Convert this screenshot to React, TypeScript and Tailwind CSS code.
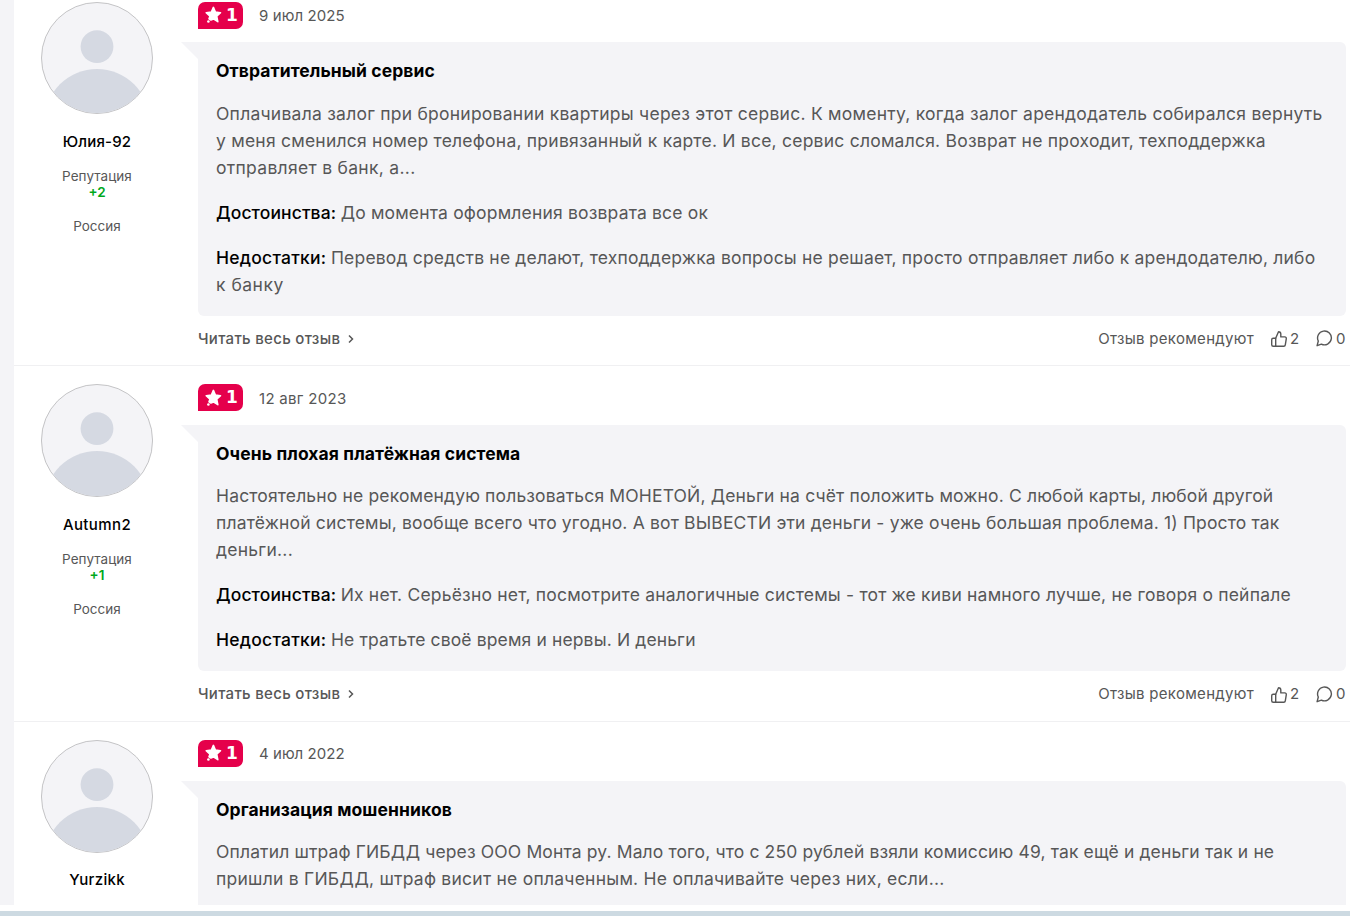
import React from 'react';

interface TextLine {
  text: string;
  label?: string;
  labelTracking?: string;
  tracking: string;
}

interface Review {
  author: string;
  nameTracking: string;
  reputation?: string;
  country?: string;
  date: string;
  dateTracking: string;
  rating: number;
  title: string;
  paragraphs: TextLine[][];
  likes?: number;
  comments?: number;
}

const reviews: Review[] = [
  {
    author: 'Юлия-92',
    nameTracking: 'tracking-[0.15px]',
    reputation: '+2',
    country: 'Россия',
    date: '9 июл 2025',
    dateTracking: 'tracking-[0.1px]',
    rating: 1,
    title: 'Отвратительный сервис',
    paragraphs: [
      [
        { text: 'Оплачивала залог при бронировании квартиры через этот сервис. К моменту, когда залог арендодатель собирался вернуть', tracking: 'tracking-[0.24px]' },
        { text: 'у меня сменился номер телефона, привязанный к карте. И все, сервис сломался. Возврат не проходит, техподдержка', tracking: 'tracking-[0.225px]' },
        { text: 'отправляет в банк, а...', tracking: 'tracking-[0.3px]' },
      ],
      [{ label: 'Достоинства:', labelTracking: 'tracking-[0.1px]', text: 'До момента оформления возврата все ок', tracking: 'tracking-[0.175px]' }],
      [
        { label: 'Недостатки:', labelTracking: 'tracking-[0.25px]', text: 'Перевод средств не делают, техподдержка вопросы не решает, просто отправляет либо к арендодателю, либо', tracking: 'tracking-[0.18px]' },
        { text: 'к банку', tracking: 'tracking-[0.5px]' },
      ],
    ],
    likes: 2,
    comments: 0,
  },
  {
    author: 'Autumn2',
    nameTracking: 'tracking-[0.4px]',
    reputation: '+1',
    country: 'Россия',
    date: '12 авг 2023',
    dateTracking: 'tracking-[0.3px]',
    rating: 1,
    title: 'Очень плохая платёжная система',
    paragraphs: [
      [
        { text: 'Настоятельно не рекомендую пользоваться МОНЕТОЙ, Деньги на счёт положить можно. С любой карты, любой другой', tracking: 'tracking-[0.15px]' },
        { text: 'платёжной системы, вообще всего что угодно. А вот ВЫВЕСТИ эти деньги - уже очень большая проблема. 1) Просто так', tracking: 'tracking-[0.165px]' },
        { text: 'деньги...', tracking: 'tracking-[0.25px]' },
      ],
      [{ label: 'Достоинства:', labelTracking: 'tracking-[0.1px]', text: 'Их нет. Серьёзно нет, посмотрите аналогичные системы - тот же киви намного лучше, не говоря о пейпале', tracking: 'tracking-[0.195px]' }],
      [{ label: 'Недостатки:', labelTracking: 'tracking-[0.25px]', text: 'Не тратьте своё время и нервы. И деньги', tracking: 'tracking-[0.135px]' }],
    ],
    likes: 2,
    comments: 0,
  },
  {
    author: 'Yurzikk',
    nameTracking: 'tracking-[0.3px]',
    date: '4 июл 2022',
    dateTracking: 'tracking-[0.05px]',
    rating: 1,
    title: 'Организация мошенников',
    paragraphs: [
      [
        { text: 'Оплатил штраф ГИБДД через ООО Монта ру. Мало того, что с 250 рублей взяли комиссию 49, так ещё и деньги так и не', tracking: 'tracking-[0.135px]' },
        { text: 'пришли в ГИБДД, штраф висит не оплаченным. Не оплачивайте через них, если...', tracking: 'tracking-[0.24px]' },
      ],
    ],
  },
];

const Avatar: React.FC = () => (
  <div className="w-28 h-[112.8px] rounded-full border border-[#c4c4c6] overflow-hidden bg-[#f4f4f7]">
    <svg viewBox="1 1 110 110" className="block w-full h-full" fill="#d5d9e2">
      <circle cx="56" cy="44.2" r="16.4" />
      <circle cx="56" cy="119" r="52.5" />
    </svg>
  </div>
);

const StarIcon: React.FC = () => (
  <svg viewBox="0 0 18 18" className="w-[18px] h-[18px]" fill="#fff" stroke="#fff" strokeWidth="1.6" strokeLinejoin="round">
    <path d="M9.4 1.4l2 4.7 5.1.6-3.8 3.5 1.1 5.4-4.4-2.7-2.5 1.1-1.9-1.1 1-2.7-3.8-3.500 5.200-.6z" />
    <circle cx="4.4" cy="15.5" r="1.3" stroke="none" />
  </svg>
);

const ThumbIcon: React.FC = () => (
  <svg viewBox="0 0 18 18" className="w-[18px] h-[18px]" fill="none" stroke="#575757" strokeWidth="1.4" strokeLinejoin="round" strokeLinecap="round">
    <path d="M5.7 8.2L8.5 1.7c1.3 0 2.3 1 2.3 2.3v2.9h4c1 0 1.6.8 1.5 1.7l-1 6.3c-.1.8-.7 1.3-1.5 1.3H5.7z" />
    <path d="M5.7 16.2H3.200c-.9 0-1.5-.6-1.5-1.5v-5c0-.9.6-1.5 1.5-1.5h2.5" />
  </svg>
);

const CommentIcon: React.FC = () => (
  <svg viewBox="0 0 18 18" className="w-[18px] h-[18px]" fill="none" stroke="#575757" strokeWidth="1.4" strokeLinejoin="round">
    <path d="M1.1 15.7L2.3 11A6.9 6.9 0 1 1 5.4 14.1z" />
  </svg>
);

const Line: React.FC<{ line: TextLine }> = ({ line }) => (
  <span className="block whitespace-nowrap">
    {line.label && <b className={`font-medium text-black inline-block mr-[4.5px] ${line.labelTracking}`}>{line.label}</b>}
    <span className={line.tracking}>{line.text}</span>
  </span>
);

const ReviewItem: React.FC<{ review: Review }> = ({ review }) => (
  <article className="flex border-b border-[#f0f0f2] pt-[18px]">
    <div className="w-[166px] shrink-0 flex flex-col items-center text-center text-[#575757]">
      <Avatar />
      <p className={`mt-[15.7px] text-[15px] leading-6 font-medium text-black ${review.nameTracking}`}>{review.author}</p>
      {review.reputation && (
        <>
          <p className="mt-[14.1px] text-[13.5px] leading-4 tracking-[0.05px]">Репутация</p>
          <p className="text-[13.5px] leading-4 font-semibold text-[#00a81c]">{review.reputation}</p>
          <p className="mt-[18px] text-[13.5px] leading-4">{review.country}</p>
        </>
      )}
    </div>
    <div className="ml-[18px] w-[1148px] shrink-0">
      <div className="flex items-center h-[27px]">
        <div className="w-[45px] h-[27px] flex items-center pl-1.5 gap-1 rounded-t-[7px] rounded-br-[7px] bg-[#e5004b] text-white">
          <StarIcon />
          <span className="font-['DejaVu_Sans',sans-serif] text-[17px] leading-[27px] font-bold">{review.rating}</span>
        </div>
        <time className={`ml-4 pt-[2.4px] text-[15px] text-[#575757] ${review.dateTracking}`}>{review.date}</time>
      </div>
      <div className="relative mt-[13.8px] p-[18px] rounded-md rounded-tl-none bg-[#f4f4f7] text-[17.5px] leading-[27px] text-[#575757]">
        <svg viewBox="0 0 17 17" className="absolute -left-[17px] top-0 w-[17px] h-[17px]" fill="#f4f4f7">
          <path d="M0 0h17v17z" />
        </svg>
        <h3 className="text-[17.5px] leading-[21.2px] font-bold text-black tracking-[0.1px]">{review.title}</h3>
        {review.paragraphs.map((lines, i) => (
          <p key={i} className="mt-[18px]">
            {lines.map((line) => <Line key={line.text} line={line} />)}
          </p>
        ))}
      </div>
      {review.likes !== undefined && (
        <div className="flex items-center justify-between h-[49.6px] pb-[2.6px] text-[15px] text-[#575757]">
          <a className="flex items-center font-medium tracking-[0.3px]">
            Читать весь отзыв
            <svg viewBox="0 0 6 10" className="ml-2 mb-px w-1.5 h-2.5" fill="none" stroke="#575757" strokeWidth="1.5">
              <path d="M1 1.5L4.5 5 1 8.5" />
            </svg>
          </a>
          <div className="flex items-center">
            <span className="tracking-[0.3px]">Отзыв рекомендуют</span>
            <span className="flex items-center ml-4 gap-0.5"><ThumbIcon /><span className="w-2.5">{review.likes}</span></span>
            <span className="flex items-center ml-4 gap-0.5"><CommentIcon /><span className="w-2.5">{review.comments}</span></span>
          </div>
        </div>
      )}
    </div>
  </article>
);

const App: React.FC = () => (
  <div className="h-[916px] w-[1350px] overflow-hidden bg-white font-['Inter','Noto_Sans',sans-serif]">
    <div className="flex h-[905px] overflow-hidden bg-[#f4f4f7]">
      <main className="ml-3.5 w-[1336px] h-full overflow-hidden bg-white">
        <div className="-mt-[16.45px]">
          {reviews.map((review) => <ReviewItem key={review.author} review={review} />)}
        </div>
      </main>
    </div>
    <div className="mt-1.5 h-[5px] bg-[#cddae2]" />
  </div>
);

export default App;
